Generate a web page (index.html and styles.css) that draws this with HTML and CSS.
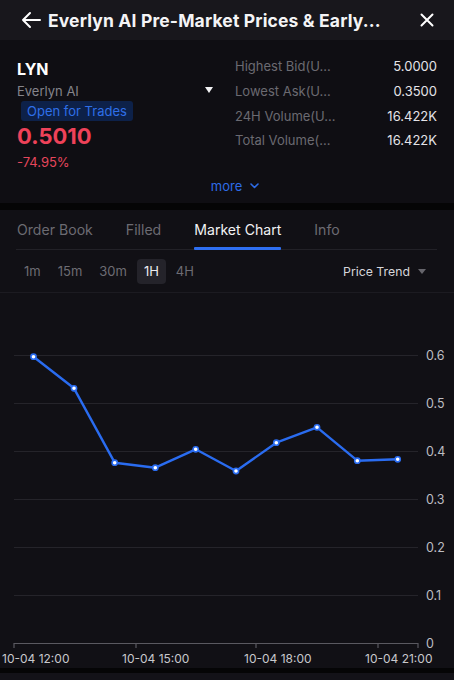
FILE: index.html
```html
<!DOCTYPE html>
<html lang="en">
<head>
<meta charset="utf-8">
<title>Everlyn AI Pre-Market</title>
<link rel="stylesheet" href="styles.css">
</head>
<body>
<div class="app">
  <header class="topbar">
    <svg class="icon back" width="22" height="18" viewBox="0 0 22 18">
      <path d="M20 9H3M10 2L3 9l7 7" fill="none" stroke="#fff" stroke-width="2" stroke-linecap="round" stroke-linejoin="round"/>
    </svg>
    <h1 class="title">Everlyn AI Pre-Market Prices &amp; Early...</h1>
    <svg class="icon close" width="14" height="14" viewBox="0 0 14 14">
      <path d="M1.5 1.5l11 11M12.5 1.5l-11 11" fill="none" stroke="#fff" stroke-width="2" stroke-linecap="round"/>
    </svg>
  </header>

  <section class="summary">
    <div class="summary-main">
      <div class="token">
        <div class="token-head">
          <div>
            <div class="symbol">LYN</div>
            <div class="name">Everlyn AI</div>
          </div>
          <span class="caret"></span>
        </div>
        <span class="badge">Open for Trades</span>
        <div class="price">0.5010</div>
        <div class="change">-74.95%</div>
      </div>
      <dl class="stats">
        <div class="stat"><dt>Highest Bid(U...</dt><dd>5.0000</dd></div>
        <div class="stat"><dt>Lowest Ask(U...</dt><dd>0.3500</dd></div>
        <div class="stat"><dt>24H Volume(U...</dt><dd>16.422K</dd></div>
        <div class="stat"><dt>Total Volume(...</dt><dd>16.422K</dd></div>
      </dl>
    </div>
    <div class="more">more
      <svg width="9" height="6" viewBox="0 0 9 6"><path d="M1 1l3.5 3.5L8 1" fill="none" stroke="#2d6be6" stroke-width="1.6" stroke-linecap="round" stroke-linejoin="round"/></svg>
    </div>
  </section>

  <div class="divider-block"></div>

  <section class="panel">
    <nav class="tabs">
      <span class="tab">Order Book</span>
      <span class="tab">Filled</span>
      <span class="tab active">Market Chart</span>
      <span class="tab">Info</span>
    </nav>
    <div class="toolbar">
      <div class="intervals">
        <span class="interval">1m</span>
        <span class="interval">15m</span>
        <span class="interval">30m</span>
        <span class="interval active">1H</span>
        <span class="interval">4H</span>
      </div>
      <div class="mode">Price Trend <span class="mode-caret"></span></div>
    </div>

    <svg class="chart" width="454" height="375" viewBox="0 0 454 375">
      <g transform="translate(0,-293)">
        <g class="grid" stroke="#25242a" stroke-width="1">
          <line x1="14" y1="355.5" x2="418" y2="355.5"/>
          <line x1="14" y1="403.5" x2="418" y2="403.5"/>
          <line x1="14" y1="451.5" x2="418" y2="451.5"/>
          <line x1="14" y1="499.5" x2="418" y2="499.5"/>
          <line x1="14" y1="547.5" x2="418" y2="547.5"/>
          <line x1="14" y1="595.5" x2="418" y2="595.5"/>
        </g>
        <g class="axis" stroke="#5a5960" stroke-width="1.2" fill="none">
          <path d="M14 648V643.5H418V648"/>
          <path d="M136 643.5V648M256 643.5V648M378 643.5V648"/>
        </g>
        <g class="ylabels" fill="#bdbdc2" font-size="12.5">
          <text x="426" y="360">0.6</text>
          <text x="426" y="408">0.5</text>
          <text x="426" y="456">0.4</text>
          <text x="426" y="504">0.3</text>
          <text x="426" y="552">0.2</text>
          <text x="426" y="600">0.1</text>
          <text x="426" y="648">0</text>
        </g>
        <g class="xlabels" fill="#c8c8cc" font-size="12">
          <text x="2" y="663">10-04 12:00</text>
          <text x="122" y="663">10-04 15:00</text>
          <text x="244" y="663">10-04 18:00</text>
          <text x="365" y="663">10-04 21:00</text>
        </g>
        <polyline fill="none" stroke="#2a6cf0" stroke-width="2.4" stroke-linejoin="round"
          points="33.5,356.7 74,388.3 114.7,462.7 155.3,467.7 195.7,449.3 236,471 276.3,442.7 317,427.3 357.3,460.7 397.7,459.3"/>
        <g fill="#fff" stroke="#2a6cf0" stroke-width="1.6">
          <circle cx="33.5" cy="356.7" r="2.6"/>
          <circle cx="74" cy="388.3" r="2.6"/>
          <circle cx="114.7" cy="462.7" r="2.6"/>
          <circle cx="155.3" cy="467.7" r="2.6"/>
          <circle cx="195.7" cy="449.3" r="2.6"/>
          <circle cx="236" cy="471" r="2.6"/>
          <circle cx="276.3" cy="442.7" r="2.6"/>
          <circle cx="317" cy="427.3" r="2.6"/>
          <circle cx="357.3" cy="460.7" r="2.6"/>
          <circle cx="397.7" cy="459.3" r="2.6"/>
        </g>
      </g>
    </svg>
  </section>

  <div class="bottom-bar"></div>
</div>
</body>
</html>
```

FILE: styles.css
```css
* {
  box-sizing: border-box;
}

html, body {
  margin: 0;
  padding: 0;
  background: #131218;
}

body {
  font-family: Inter, "Noto Sans", "Liberation Sans", sans-serif;
  color: #fff;
  width: 454px;
  height: 680px;
  overflow: hidden;
}

.app {
  display: flex;
  flex-direction: column;
}

/* ---------- top bar ---------- */
.topbar {
  height: 40px;
  background: #18171c;
  display: flex;
  align-items: center;
  padding: 0 20px 0 20px;
}

.icon.back {
  flex: none;
  margin-right: 6px;
}

.title {
  flex: 1;
  margin: 0;
  font-size: 17.5px;
  font-weight: 700;
  white-space: nowrap;
  overflow: hidden;
  letter-spacing: 0.15px;
  color: #f4f4f6;
}

.icon.close {
  flex: none;
}

/* ---------- summary ---------- */
.summary {
  background: #0f0e13;
  height: 163px;
  padding: 19px 17px 0 17px;
  display: flex;
  flex-direction: column;
}

.summary-main {
  display: flex;
  justify-content: space-between;
}

.token {
  width: 196px;
  display: flex;
  flex-direction: column;
  align-items: flex-start;
}

.token-head {
  width: 100%;
  display: flex;
  justify-content: space-between;
  align-items: flex-end;
}

.symbol {
  font-size: 16px;
  font-weight: 700;
  line-height: 20px;
  color: #fff;
}

.name {
  font-size: 13px;
  line-height: 18px;
  margin-top: 3px;
  color: #85848b;
}

.caret {
  width: 0;
  height: 0;
  border-left: 4.5px solid transparent;
  border-right: 4.5px solid transparent;
  border-top: 6px solid #f2f2f4;
  margin-bottom: 7px;
}

.badge {
  margin: 1px 0 0 4px;
  padding: 0 6px;
  height: 20px;
  line-height: 20px;
  font-size: 13px;
  color: #2f6fe8;
  background: #0d2149;
  border-radius: 3px;
}

.price {
  font-size: 22px;
  font-weight: 700;
  line-height: 26px;
  margin-top: 2px;
  color: #ef4259;
}

.change {
  font-size: 13px;
  line-height: 16px;
  margin-top: 5px;
  color: #e6465c;
}

.stats {
  margin: -2px 0 0 0;
  width: 202px;
  display: flex;
  flex-direction: column;
  gap: 6.8px;
}

.stat {
  display: flex;
  justify-content: space-between;
  font-size: 13px;
  line-height: 18px;
}

.stat dt {
  color: #6b6a71;
}

.stat dd {
  margin: 0;
  color: #e4e4e8;
}

.more {
  margin-top: 8px;
  align-self: center;
  display: flex;
  align-items: center;
  gap: 8px;
  font-size: 13px;
  color: #2d6be6;
  padding-left: 16px;
}

.divider-block {
  height: 7px;
  background: #050506;
}

/* ---------- tabs panel ---------- */
.panel {
  background: #111015;
}

.tabs {
  margin: 0 17px 0 16px;
  height: 40px;
  display: flex;
  gap: 33px;
  border-bottom: 1px solid #222127;
  padding-left: 1px;
}

.tab {
  font-size: 14.1px;
  line-height: 40px;
  color: #6c6b72;
  position: relative;
}

.tab.active {
  color: #f2f2f4;
}

.tab.active::after {
  content: "";
  position: absolute;
  left: 0;
  right: 0;
  bottom: -1px;
  height: 3px;
  background: #2e6ff2;
  border-radius: 1px;
}

.toolbar {
  height: 43px;
  display: flex;
  align-items: center;
  justify-content: space-between;
  padding: 0 28px 0 17px;
  border-bottom: 1px solid #1c1b21;
}

.intervals {
  display: flex;
  gap: 3px;
}

.interval {
  font-size: 13px;
  color: #6d6c73;
  height: 25px;
  line-height: 25px;
  padding: 0 7px;
  border-radius: 4px;
}

.interval.active {
  background: #24232a;
  color: #ececf0;
}

.mode {
  display: flex;
  align-items: center;
  gap: 8px;
  font-size: 12.3px;
  color: #d6d6da;
}

.mode-caret {
  width: 0;
  height: 0;
  border-left: 4px solid transparent;
  border-right: 4px solid transparent;
  border-top: 5px solid #66656c;
}

.chart {
  display: block;
  font-family: Inter, "Noto Sans", "Liberation Sans", sans-serif;
}

.bottom-bar {
  height: 5px;
  background: #050506;
}
```
